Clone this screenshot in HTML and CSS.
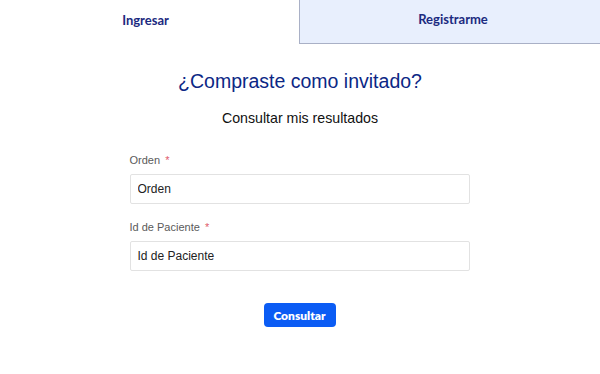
FILE: index.html
```html
<!DOCTYPE html>
<html lang="es">
<head>
<meta charset="utf-8">
<link rel="stylesheet" href="styles.css">
</head>
<body>
<nav class="tabs">
  <div class="tab tab-active"><span class="tab-label shift-left">Ingresar</span></div>
  <div class="tab tab-other"><span class="tab-label shift-right">Registrarme</span></div>
</nav>
<main class="content">
  <h1 class="title">¿Compraste como invitado?</h1>
  <h2 class="subtitle">Consultar mis resultados</h2>
  <form class="form">
    <div class="field">
      <label class="label">Orden <span class="req">*</span></label>
      <input class="input" type="text" placeholder="Orden">
    </div>
    <div class="field">
      <label class="label">Id de Paciente <span class="req">*</span></label>
      <input class="input" type="text" placeholder="Id de Paciente">
    </div>
    <div class="actions">
      <button class="btn" type="button">Consultar</button>
    </div>
  </form>
</main>
</body>
</html>
```
FILE: styles.css
```css
html, body {
  margin: 0;
  padding: 0;
  background: #ffffff;
  font-family: "Liberation Sans", sans-serif;
}
.tabs {
  display: grid;
  grid-template-columns: 299px 1fr;
  height: 44px;
}
.tab {
  display: flex;
  align-items: center;
  justify-content: center;
  font-family: Lato, "Liberation Sans", sans-serif;
  font-weight: 700;
  font-size: 13px;
  color: #1b2a80;
  padding-bottom: 5px;
  box-sizing: border-box;
}
.tab-active {
  background: #ffffff;
}
.tab-other {
  background: #e8effd;
  border-left: 1px solid #a9b0c6;
  border-bottom: 1px solid #a9b0c6;
}
.shift-left {
  margin-right: 8px;
}
.shift-right {
  margin-left: 6px;
}
.content {
  display: flex;
  flex-direction: column;
  align-items: center;
}
.title {
  margin: 23px 0 0;
  font-weight: 400;
  font-size: 19.5px;
  line-height: 28px;
  color: #0c2785;
}
.subtitle {
  margin: 13px 0 0;
  font-weight: 400;
  font-size: 14.2px;
  line-height: 20px;
  color: #111;
}
.form {
  width: 340px;
  margin-top: 25px;
  margin-right: 1px;
  display: flex;
  flex-direction: column;
  gap: 16px;
}
.field {
  display: flex;
  flex-direction: column;
  gap: 7px;
}
.label {
  font-size: 11px;
  line-height: 14px;
  color: #5a5a5a;
}
.req {
  color: #e05a6a;
  margin-left: 2px;
}
.input {
  height: 30px;
  box-sizing: border-box;
  border: 1px solid #e2e2e2;
  border-radius: 2px;
  background: #fff;
  padding: 0 7px;
  font-family: "Liberation Sans", sans-serif;
  font-size: 12px;
  color: #222;
  outline: none;
}
.input::placeholder {
  color: #222;
}
.actions {
  display: flex;
  justify-content: center;
  margin-top: 16px;
}
.btn {
  width: 72px;
  height: 24px;
  border: none;
  border-radius: 4px;
  background: #0b5cf4;
  color: #fff;
  font-family: Lato, "Liberation Sans", sans-serif;
  font-weight: 800;
  font-size: 12px;
  padding: 0;
}
```
